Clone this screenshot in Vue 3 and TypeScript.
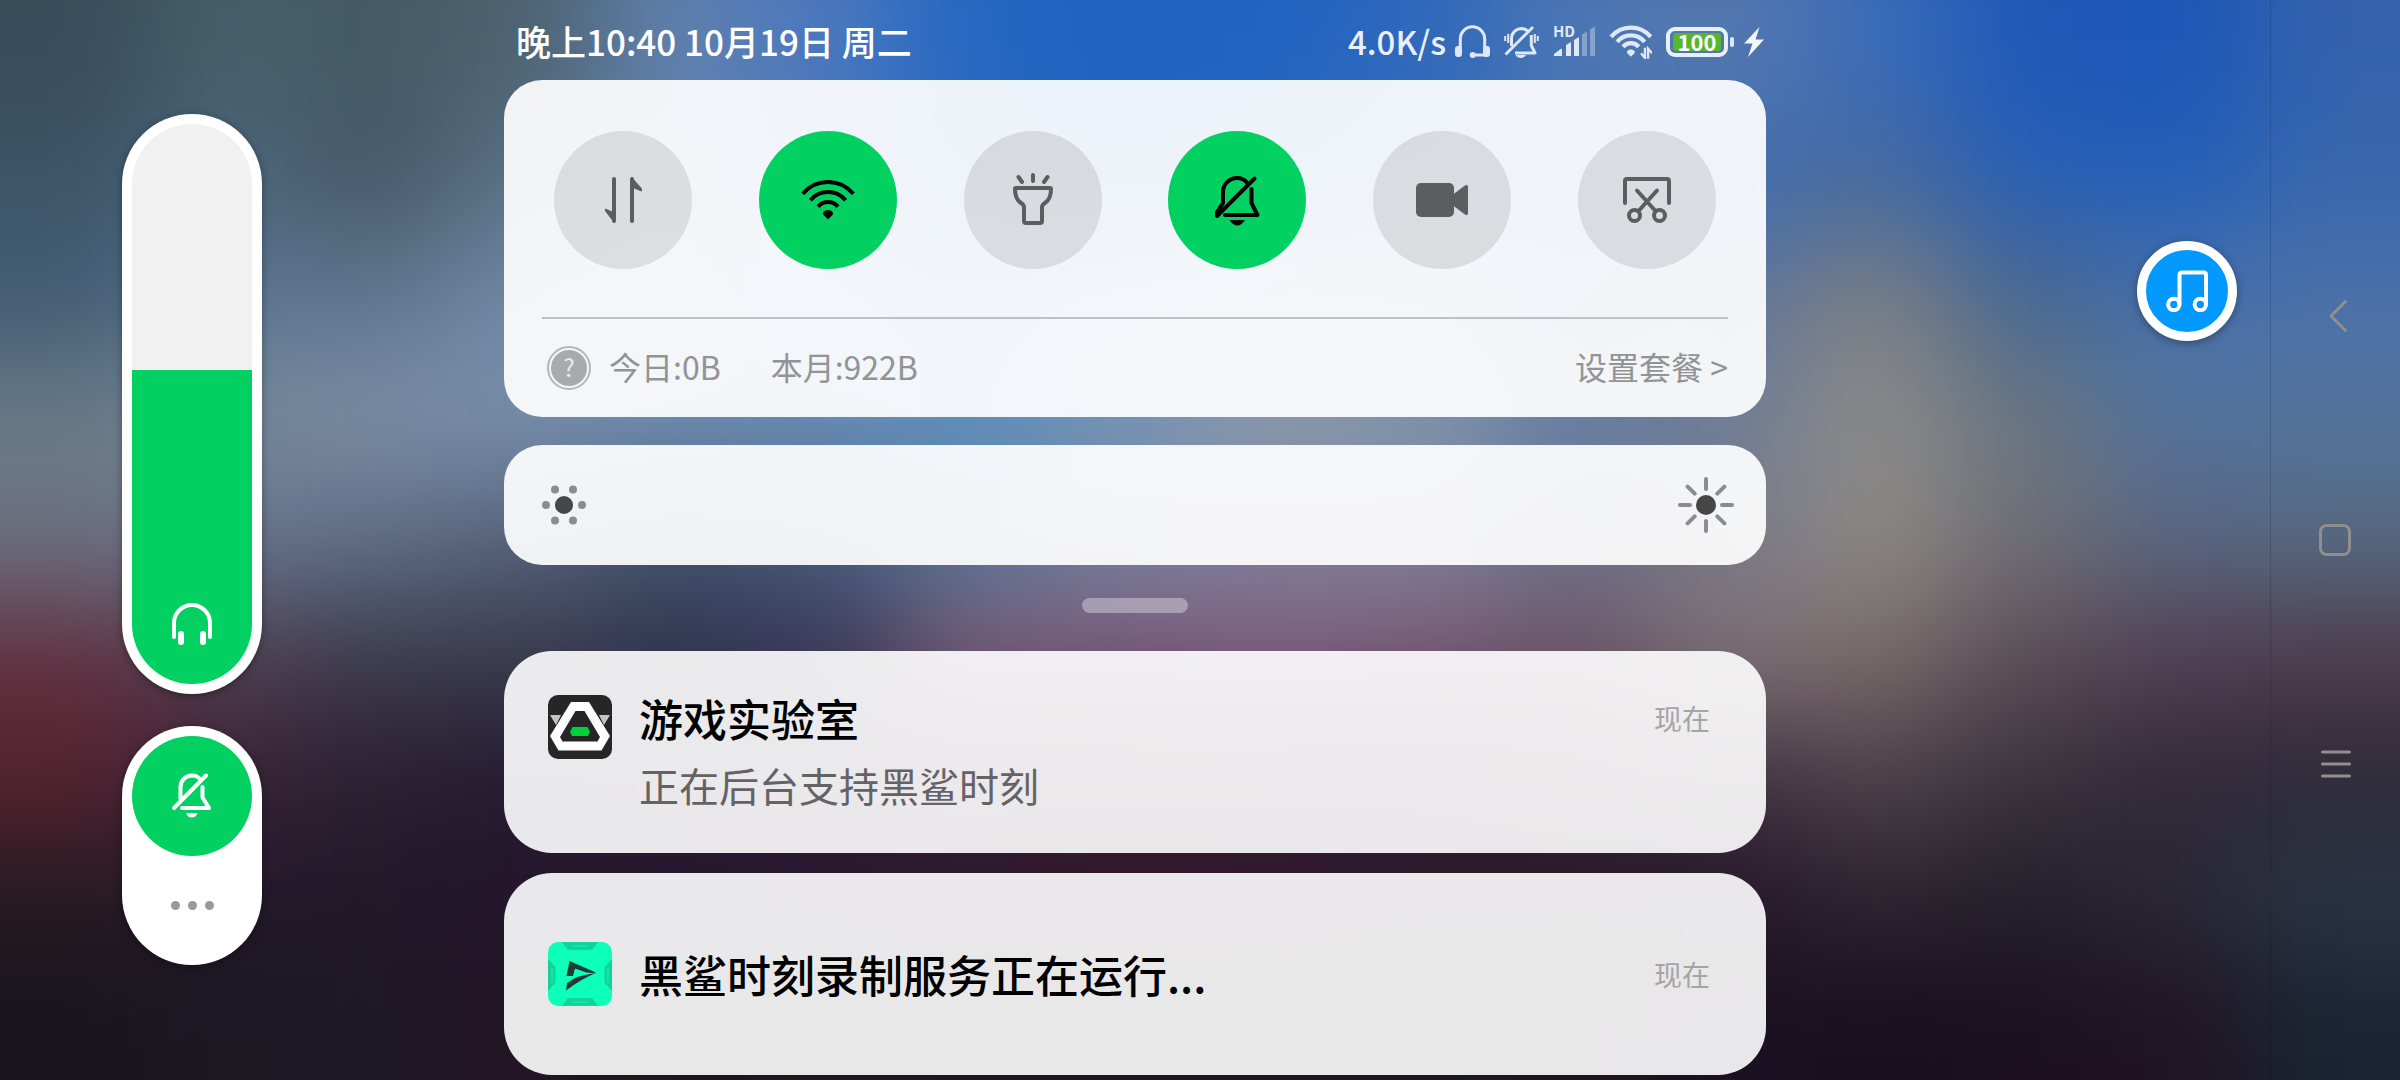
<script setup lang="ts">
import { computed, ref } from 'vue'

interface Tile {
  id: string
  label: string
  on: boolean
}

interface Notice {
  id: string
  title: string
  body?: string
  time: string
}

const tiles = ref<Tile[]>([
  { id: 'data', label: '移动数据', on: false },
  { id: 'wifi', label: 'WLAN', on: true },
  { id: 'torch', label: '手电筒', on: false },
  { id: 'mute', label: '静音', on: true },
  { id: 'record', label: '录屏', on: false },
  { id: 'capture', label: '截屏', on: false },
])

const notices: Notice[] = [
  { id: 'lab', title: '游戏实验室', body: '正在后台支持黑鲨时刻', time: '现在' },
  { id: 'shark', title: '黑鲨时刻录制服务正在运行...', time: '现在' },
]

const volume = ref(56)
const brightness = ref(0)

// Coarse colour mesh of the wallpaper, softened by a blur in CSS.
const mesh: string[] = [
  '384c5a 44606a 445a66 4d6370 6080ae 4a78bf 2467c2 1e63c2 2064c3 3068bb 4a76b4 5578ae 3a6cb8 2058b8 1c56b8 3462ad',
  '3c5568 4d667c 455868 5a7286 6b86b0 4b77b8 2a68bd 2266c0 2c68bd 3f6eb4 4a74b2 406cb0 466a9c 2a60b5 2560b8 3767ae',
  '415c74 5b7792 5f7890 7189a6 7790b4 6a90bc 5b8dc0 7194bc 7c98b6 7290b2 5b7fac 627699 7c7f83 49688f 4871ab 4b72a8',
  '6b7c88 768799 7c8da4 7890ab 6f8fb4 6a8fb8 6092be 7595b5 8b9aab 8095aa 6680a4 6f7d96 8d8b89 6a7580 52729c 54739b',
  '6b7080 667590 5e6d86 55617a 425069 465a78 5a7497 77809f 80809a 80809a 6c6f88 7a7a86 8c8884 706e74 5a6680 566a80',
  '62303f 4f3c4e 3b3b4c 3a3a4c 2f3450 3a3858 7a5a74 7a5875 7e5c7e 7a5874 6c5566 7e6f74 77696a 5a4d55 523e52 4f3a4a',
  '542230 3a2236 2a2030 241a30 281c34 2c1c34 341e34 3a1c34 3a1c38 321c34 3a2436 403040 4c4048 3a323c 302838 2c2a38',
  '241a20 22182a 201828 25152c 26162e 2a1630 2d172c 2f172c 2d172c 28182a 281828 25172a 2c2430 22202a 2a2836 2a3444',
  '18151e 1c1822 1e1824 221424 20151f 1e1620 201820 201820 201820 201820 1e1420 1c1122 180f1e 1c1020 201422 1a2432',
]

// The outermost rows and columns are repeated so the blur never runs out of colour.
const cells = computed<string[]>(() => {
  const rows = mesh.map((line) => {
    const row = line.split(' ')
    return [row[0], ...row, row[row.length - 1]]
  })
  return [rows[0], ...rows, rows[rows.length - 1]].flat()
})
</script>

<template>
  <div class="screen">
    <div class="wallpaper" aria-hidden="true">
      <div class="mesh">
        <i v-for="(c, i) in cells" :key="i" :style="{ backgroundColor: '#' + c }"></i>
      </div>
    </div>

    <aside class="side-left">
      <label class="volume">
        <input v-model.number="volume" type="range" min="0" max="100" aria-label="音量" :style="{ '--level': volume + '%' }" />
        <svg class="phones" width="40" height="42" viewBox="0 0 40 42">
          <path d="M2 34V20A18 18 0 0 1 38 20V34" fill="none" stroke="#fff" stroke-width="4" stroke-linecap="round" />
          <rect x="6" y="28" width="6" height="14" rx="3" fill="#fff" />
          <rect x="28" y="28" width="6" height="14" rx="3" fill="#fff" />
        </svg>
      </label>
      <div class="ringer">
        <button class="ringer-mute" type="button" aria-label="静音">
          <svg width="40" height="46" viewBox="0 0 40 46" fill="none" stroke="#fff" stroke-width="4" stroke-linecap="round" stroke-linejoin="round">
            <path d="M34 2.5 2 35M8.5 26V14A11.5 11.5 0 0 1 20 2.5c3.500 0 6.500 1.500 8.500 4M30.500 14V24.500L37 35H10" />
            <path d="M14 40h11.500c-1 3-3 4.500-5.800 4.500S15 43 14 40z" fill="#fff" stroke="none" />
          </svg>
        </button>
        <button class="ringer-more" type="button" aria-label="更多">
          <i></i><i></i><i></i>
        </button>
      </div>
    </aside>

    <main class="shade">
      <header class="status">
        <span class="clock">晚上10:40 10月19日 周二</span>
        <div class="indicators">
          <span class="speed">4.0K/s</span>
          <svg width="35" height="34" viewBox="0 0 35 34" fill="none" stroke="currentColor" stroke-width="3">
            <path d="M5.300 23V14A12.200 12.200 0 0 1 29.700 14V23M17.700 30H31" />
            <rect x="0" y="21" width="7" height="11" rx="3" fill="currentColor" stroke="none" />
            <rect x="28" y="21" width="7" height="11" rx="3" fill="currentColor" stroke="none" />
            <circle cx="17.700" cy="30" r="3" fill="currentColor" stroke="none" />
          </svg>
          <svg width="35" height="34" viewBox="0 0 35 34" fill="none" stroke="currentColor" stroke-width="3" stroke-linejoin="round">
            <path d="M29 2 1.500 29.500M7.500 21V13A10 10 0 0 1 17 3.500c3 0 5 1 6.500 2.500M27.300 10V20.500L31 28H11" />
            <path d="M1.200 11v5M4.200 9v9M30.800 9v9M33.800 11v5" stroke-width="2" />
            <path d="M11.500 30h10.500c-1 2-3 3-5.200 3s-4.200-1-5.300-3z" fill="currentColor" stroke="none" />
          </svg>
          <div class="signal">
            <span>HD</span>
            <svg width="42" height="34" viewBox="0 0 42 34" fill="currentColor">
              <path d="M1 31V29L7 24.500Q9 23 9 25V31zM13 31V20L18 17V31zM21 31V15L26 12V31z" />
              <path d="M29 31V9.500L34 6.500V31zM37 31V4.500L42 1.500V31z" opacity="0.400" />
            </svg>
          </div>
          <svg width="43" height="34" viewBox="0 0 55 43" fill="none" stroke="currentColor" stroke-width="5.500">
            <path d="M2.700 14.800A33 33 0 0 1 53.300 14.800M10.400 21.200A23 23 0 0 1 45.600 21.200M18 27.600A13 13 0 0 1 38 27.600" />
            <path d="M28 31c4 0 6 3 4.500 5L28 40.500 23.500 36C22 34 24 31 28 31z" fill="currentColor" stroke="none" />
            <path d="M46 29V42L41 36M50 43V30L55 36" stroke-width="3" />
          </svg>
          <div class="battery">
            <div class="battery-body"><span>100</span></div>
            <i></i>
          </div>
          <svg class="bolt" width="20" height="30" viewBox="0 0 20 30" fill="#f4f7fd">
            <path d="M15.500 0 0 16.500H8.500L4 30 20 12.500H11.500z" />
          </svg>
        </div>
      </header>

      <section class="card quick">
        <div class="tiles">
          <button
            v-for="tile in tiles"
            :key="tile.id"
            type="button"
            class="tile"
            :class="{ on: tile.on }"
            :aria-label="tile.label"
            :aria-pressed="tile.on"
            @click="tile.on = !tile.on"
          >
            <svg v-if="tile.id === 'data'" width="48" height="48" viewBox="0 0 48 48" fill="currentColor" stroke="currentColor" stroke-linejoin="round" stroke-linecap="round">
              <path d="M15 3V45M33 3V45" stroke-width="4" />
              <path d="M15 46 6.500 35V33L15 37zM33 2 42.500 12.500V15L33 11z" stroke-width="1" />
            </svg>
            <svg v-else-if="tile.id === 'wifi'" width="56" height="40" viewBox="0 1 56 40" fill="none" stroke="currentColor" stroke-width="4">
              <path d="M2.700 14.800A33 33 0 0 1 53.300 14.800M10.400 21.200A23 23 0 0 1 45.600 21.200M18 27.600A13 13 0 0 1 38 27.600" />
              <path d="M28 31c4 0 6 3 4.500 5L28 40.500 23.500 36C22 34 24 31 28 31z" fill="currentColor" stroke="none" />
            </svg>
            <svg v-else-if="tile.id === 'torch'" width="48" height="56" viewBox="0 0 48 56" fill="none" stroke="currentColor" stroke-width="4" stroke-linecap="round">
              <path d="M7 16H41q1 0 1 1c0 8-3 12-6 14q-3 2-3 4V49q0 2-2 2H17q-2 0-2-2V35q0-2-3-4c-3-2-6-6-6-14q0-1 1-1z" />
              <path d="M24 3V9M9.500 5 13 10M38.500 5 35 10" />
            </svg>
            <svg v-else-if="tile.id === 'mute'" width="48" height="52" viewBox="0 0 48 52" fill="none" stroke="currentColor" stroke-width="4" stroke-linecap="round" stroke-linejoin="round">
              <path d="M41.500 4.500 4 42 4 38 10 29V18A14 14 0 0 1 24 4c4 0 8 2 10.500 5M38.500 15V29L44.500 41H12" />
              <path d="M16.500 46h15.500c-2 3.500-5 5.500-7.700 5.500s-5.700-2-7.800-5.500z" fill="currentColor" stroke="none" />
            </svg>
            <svg v-else-if="tile.id === 'record'" width="52" height="36" viewBox="0 0 52 36" fill="currentColor">
              <rect x="0" y="1" width="38" height="34" rx="5" />
              <path d="M37 12.500 49 3.500Q52 2 52 5V31q0 3-3 1.500L37 23.500z" />
            </svg>
            <svg v-else width="52" height="50" viewBox="0 0 52 50" fill="none" stroke="currentColor" stroke-width="4" stroke-linecap="round">
              <path d="M4 28V6Q4 4 6 4H46Q48 4 48 6V28M16 15.500 34.500 36M36 15.500 17.500 36" />
              <circle cx="13.500" cy="40.500" r="5.500" />
              <circle cx="38.500" cy="40.500" r="5.500" />
            </svg>
          </button>
        </div>
        <footer class="usage">
          <span class="help"><span>?</span></span>
          <span class="figure">今日:0B</span>
          <span class="figure">本月:922B</span>
          <a href="#">设置套餐 &gt;</a>
        </footer>
      </section>

      <label class="card brightness">
        <svg width="44" height="44" viewBox="0 0 44 44" fill="#8c8c8c">
          <circle cx="22" cy="22" r="9" fill="#474747" />
          <circle cx="4" cy="22" r="4" />
          <circle cx="40" cy="22" r="4" />
          <circle cx="13" cy="6.500" r="4" />
          <circle cx="31" cy="6.500" r="4" />
          <circle cx="13" cy="37.500" r="4" />
          <circle cx="31" cy="37.500" r="4" />
        </svg>
        <input v-model.number="brightness" type="range" min="0" max="100" aria-label="亮度" />
        <svg width="56" height="56" viewBox="0 0 56 56" fill="none" stroke="#8c8c8c" stroke-width="4" stroke-linecap="round">
          <circle cx="28" cy="28" r="10" fill="#474747" stroke="none" />
          <path d="M28 2V12M28 44V54M2 28H12M44 28H54M9.600 9.600 16.700 16.700M39.300 39.300 46.400 46.400M46.400 9.600 39.300 16.700M16.700 39.300 9.600 46.400" />
        </svg>
      </label>

      <div class="handle"></div>

      <article v-for="n in notices" :key="n.id" class="card notice" :class="{ single: !n.body }">
        <svg v-if="n.id === 'lab'" width="64" height="64" viewBox="0 0 64 64">
          <rect width="64" height="64" rx="10" fill="#262626" />
          <path d="M2 20H13L8 30zM62 20H51L56 30z" fill="#c4c4c4" />
          <path fill-rule="evenodd" d="M23 7H41L62 41 53.500 55.500H10.500L2 41zM27.500 16 12 42 14.500 46.500H49.500L52 42 36.500 16z" fill="#fff" />
          <path d="M24.500 32H39.500L42 37 40 41H24L22 37z" fill="#00d136" />
        </svg>
        <svg v-else width="64" height="64" viewBox="0 0 64 64">
          <rect width="64" height="64" rx="10" fill="#0dffb9" />
          <path d="M14 0H50L44 8H20zM14 64H50L44 56H20zM0 17 7.500 25V41L0 49zM64 17 56.500 25V41L64 49z" fill="#12d39c" />
          <path d="M25 4H39M25 60H39M4 26V40M60 26V40" stroke="#0de8aa" stroke-width="2" />
          <path d="M21.500 19 48 30.500Q41 32 34 29L27 26.500 25 34H18.500zM48 31Q33 37 18 48.500L19 41Q29 33 48 31z" fill="#1d3a35" />
        </svg>
        <div class="notice-text">
          <h2>{{ n.title }}</h2>
          <p v-if="n.body">{{ n.body }}</p>
        </div>
        <time>{{ n.time }}</time>
      </article>
    </main>

    <aside class="side-right">
      <button class="music" type="button" aria-label="音乐">
        <svg width="42" height="42" viewBox="0 0 42 42" fill="none" stroke="#fff" stroke-width="4">
          <path d="M13.500 34.500V5Q13.500 2.500 16 2.500H37.500Q40 2.500 40 5V34.500" />
          <circle cx="7.800" cy="34.500" r="5.700" />
          <circle cx="34.300" cy="34.500" r="5.700" />
        </svg>
      </button>
    </aside>

    <nav class="navbar" aria-label="系统导航">
      <button type="button" aria-label="返回">
        <svg width="32" height="34" viewBox="0 0 32 34" fill="none" stroke="currentColor" stroke-width="3" stroke-linecap="round" stroke-linejoin="round">
          <path d="M26.500 2.500 12 17 26.500 31.500" />
        </svg>
      </button>
      <button type="button" aria-label="主页">
        <svg width="32" height="32" viewBox="0 0 32 32" fill="none" stroke="currentColor" stroke-width="3">
          <rect x="1.500" y="1.500" width="29" height="29" rx="6" />
        </svg>
      </button>
      <button type="button" aria-label="最近任务">
        <svg width="32" height="30" viewBox="0 0 32 30" fill="none" stroke="currentColor" stroke-width="3" stroke-linecap="round">
          <path d="M3.500 3H30.500M3.500 15H30.500M3.500 27H30.500" />
        </svg>
      </button>
    </nav>
  </div>
</template>

<style>
body {
  margin: 0;
  background: #1e1824;
}
</style>

<style scoped>
.screen {
  position: relative;
  display: grid;
  grid-template-columns: 504px minmax(0, 1fr) 504px 130px;
  min-height: 100vh;
  overflow: hidden;
  font-family: 'Noto Sans CJK SC', 'Noto Sans', sans-serif;
  isolation: isolate;
}

button {
  display: flex;
  align-items: center;
  justify-content: center;
  padding: 0;
  border: 0;
  background: none;
  color: inherit;
  font: inherit;
  cursor: pointer;
}

svg {
  display: block;
  flex: none;
}

.wallpaper {
  position: absolute;
  inset: 0;
  z-index: -1;
  overflow: hidden;
}

.mesh {
  display: grid;
  grid-template-columns: repeat(18, 1fr);
  grid-auto-rows: 1fr;
  width: 112.5%;
  height: 122.2%;
  margin: -5% -6.25%;
  filter: blur(56px);
}

/* side controls */

.side-left {
  display: flex;
  flex-direction: column;
  align-items: flex-start;
  gap: 32px;
  padding: 114px 0 0 122px;
}

.volume {
  position: relative;
  display: block;
  padding: 10px;
  border-radius: 70px;
  background: #fff;
  box-shadow: 0 2px 8px rgba(0, 0, 0, 0.35);
}

.volume input {
  display: block;
  width: 120px;
  height: 560px;
  margin: 0;
  border-radius: 60px;
  appearance: none;
  writing-mode: vertical-lr;
  direction: rtl;
  background: linear-gradient(to top, #02d162 var(--level), #f1f1f1 var(--level));
}

.volume input::-webkit-slider-thumb {
  appearance: none;
  width: 120px;
  height: 2px;
  background: transparent;
}

.phones {
  position: absolute;
  left: 50px;
  bottom: 49px;
  pointer-events: none;
}

.ringer {
  display: flex;
  flex-direction: column;
  gap: 30px;
  width: 120px;
  padding: 10px 10px 40px;
  border-radius: 70px;
  background: #fff;
  box-shadow: 0 2px 8px rgba(0, 0, 0, 0.35);
}

.ringer-mute {
  width: 120px;
  height: 120px;
  border-radius: 50%;
  background: #02d162;
}

.ringer-more {
  gap: 8px;
  height: 39px;
}

.ringer-more i {
  width: 9px;
  height: 9px;
  border-radius: 50%;
  background: #999;
}

.side-right {
  display: flex;
  justify-content: flex-end;
  align-items: flex-start;
  padding: 241px 33px 0 0;
}

.music {
  width: 100px;
  height: 100px;
  border: 9px solid #fff;
  border-radius: 50%;
  background: #0199ff;
  box-shadow: 0 2px 8px rgba(0, 0, 0, 0.35);
}

.navbar {
  display: flex;
  flex-direction: column;
  align-items: center;
  justify-content: center;
  gap: 160px;
  padding-right: 2px;
  border-left: 1px solid rgba(0, 0, 40, 0.15);
  color: #8f8f8f;
}

.navbar button {
  width: 64px;
  height: 64px;
}

/* status bar */

.shade {
  min-width: 0;
}

.status {
  display: flex;
  align-items: center;
  justify-content: space-between;
  height: 76px;
  padding: 4px 2px 0 12px;
  color: #dfe8f7;
  white-space: nowrap;
}

.clock,
.speed {
  padding-bottom: 3px;
  font-weight: 500;
}

.clock {
  font-size: 35px;
  color: #fff;
}

.indicators {
  display: flex;
  align-items: center;
  gap: 14px;
}

.speed {
  margin-right: -5px;
  font-size: 33px;
  color: #e9f0fb;
}

.signal {
  position: relative;
}

.signal span {
  position: absolute;
  top: 0;
  left: 0;
  font-size: 15px;
  line-height: 12px;
  font-weight: 700;
}

.battery {
  display: flex;
  align-items: center;
  gap: 2px;
}

.battery-body {
  display: flex;
  box-sizing: border-box;
  width: 62px;
  height: 30px;
  padding: 2px 3px;
  border: 4px solid #eaf0fa;
  border-radius: 9px;
}

.battery-body span {
  flex: 1;
  border-radius: 3px;
  background: #57b52f;
  color: #fff;
  font-size: 22px;
  line-height: 17px;
  font-weight: 700;
  text-align: center;
}

.battery i {
  width: 4px;
  height: 10px;
  border-radius: 2px;
  background: #dfe8f7;
}

.bolt {
  margin-left: -4px;
}

/* panels */

.card {
  border-radius: 38px;
  background: rgba(255, 255, 255, 0.92);
}

.quick {
  padding: 51px 38px 0;
}

.tiles {
  display: flex;
  justify-content: space-between;
  padding: 0 12px 48px;
  border-bottom: 2px solid #c0c1c4;
}

.tile {
  width: 138px;
  height: 138px;
  border-radius: 50%;
  background: rgba(60, 60, 60, 0.13);
  color: #5c5d5e;
}

.tile.on {
  background: #02d162;
  color: #000;
}

.usage {
  display: flex;
  align-items: center;
  height: 98px;
  padding-left: 5px;
  color: #929394;
  font-size: 32px;
  white-space: nowrap;
}

.help {
  display: flex;
  box-sizing: border-box;
  width: 44px;
  height: 44px;
  padding: 2px;
  border: 2px solid #b4b5b6;
  border-radius: 50%;
}

.help span {
  flex: 1;
  border-radius: 50%;
  background: #a9aaab;
  color: #eceded;
  font-size: 24px;
  line-height: 34px;
  text-align: center;
}

.figure {
  margin: 0 32px 0 18px;
  padding-bottom: 4px;
}

.usage a {
  margin-left: auto;
  padding-bottom: 4px;
  color: inherit;
  text-decoration: none;
}

.brightness {
  display: flex;
  align-items: center;
  gap: 20px;
  height: 120px;
  margin-top: 28px;
  padding: 0 32px 0 38px;
}

.brightness input {
  flex: 1;
  min-width: 0;
  height: 60px;
  margin: 0;
  appearance: none;
  background: transparent;
}

.brightness input::-webkit-slider-thumb {
  appearance: none;
  width: 2px;
  height: 60px;
  background: transparent;
}

.handle {
  width: 106px;
  height: 15px;
  margin: 33px auto 38px;
  border-radius: 8px;
  background: rgba(255, 255, 255, 0.35);
}

.notice {
  display: flex;
  align-items: flex-start;
  box-sizing: border-box;
  min-height: 202px;
  margin-bottom: 20px;
  padding: 44px 56px 40px 44px;
  border-radius: 48px;
  background: rgba(255, 255, 255, 0.9);
}

.notice:last-child {
  margin-bottom: 5px;
}

.notice.single {
  align-items: center;
  padding-block: 0;
}

.notice-text {
  flex: 1;
  min-width: 0;
  margin-left: 27px;
}

.notice h2 {
  margin: 0;
  color: #000;
  font-size: 44px;
  line-height: 46px;
  font-weight: 500;
}

.notice p {
  margin: 18px 0 0;
  color: #646265;
  font-size: 40px;
  line-height: 52px;
}

.notice time {
  color: #a6a4a6;
  font-size: 28px;
  line-height: 46px;
}
</style>
